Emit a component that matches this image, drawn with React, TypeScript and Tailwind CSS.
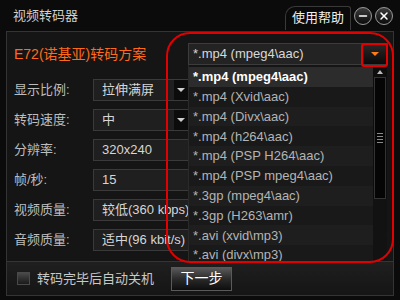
import { Minus, X } from "lucide-react";

const formats = [
  "*.mp4 (mpeg4\\aac)",
  "*.mp4 (Xvid\\aac)",
  "*.mp4 (Divx\\aac)",
  "*.mp4 (h264\\aac)",
  "*.mp4 (PSP H264\\aac)",
  "*.mp4 (PSP mpeg4\\aac)",
  "*.3gp (mpeg4\\aac)",
  "*.3gp (H263\\amr)",
  "*.avi (xvid\\mp3)",
  "*.avi (divx\\mp3)",
];

const fields = [
  { label: "显示比例:", value: "拉伸满屏", select: true },
  { label: "转码速度:", value: "中", select: true },
  { label: "分辨率:", value: "320x240", select: false },
  { label: "帧/秒:", value: "15", select: false },
  { label: "视频质量:", value: "较低(360 kbps)", select: false },
  { label: "音频质量:", value: "适中(96 kbit/s)", select: false },
];

function Arrow({ color = "border-t-[#cfcfcf]" }: { color?: string }) {
  return (
    <span
      className={`inline-block w-0 h-0 border-l-[4px] border-r-[4px] border-t-[4px] border-l-transparent border-r-transparent ${color}`}
    />
  );
}

export default function App() {
  return (
    <div
      className="relative w-[400px] h-[300px] overflow-hidden bg-[#0b0b0b] flex flex-col"
      style={{ fontFamily: '"Liberation Sans", "Noto Sans CJK SC", sans-serif' }}
    >
      {/* title bar */}
      <div className="h-[31px] flex items-center justify-between pl-[13px] pr-[7px]">
        <span className="text-[13px] text-[#cfcfcf]">视频转码器</span>
        <div className="flex items-center gap-[3px] self-stretch">
          <div className="mt-[4px] h-[24px] px-[6px] flex items-center rounded-tl-[10px] rounded-tr-[3px] border-t border-l border-r border-[#3a3a3a] bg-[#0a0a0a]">
            <span className="text-[13px] text-[#eeeeee]">使用帮助</span>
          </div>
          <span className="w-[18px] h-[18px] rounded-full border border-[#9a9a9a] bg-gradient-to-b from-[#3c3c3c] to-[#0c0c0c] flex items-center justify-center text-white">
            <Minus size={12} strokeWidth={3} />
          </span>
          <span className="w-[18px] h-[18px] rounded-full border border-[#9a9a9a] bg-gradient-to-b from-[#3c3c3c] to-[#0c0c0c] flex items-center justify-center text-white">
            <X size={12} strokeWidth={3} />
          </span>
        </div>
      </div>

      {/* main panel */}
      <div className="relative mx-[6px] h-[231px] border border-[#343434] bg-[#151515] pt-[11px] pl-[7px] pr-[5px] overflow-hidden">
        <div className="h-[22px] flex items-center justify-between">
          <span className="text-[14px] text-[#ff6a1a]">E72(诺基亚)转码方案</span>
          <div className="w-[200px] h-[22px] flex border border-[#3c3c3c] bg-[#232323]">
            <span className="flex-1 flex items-center pl-[4px] text-[13px] text-[#d8d8d8]">
              *.mp4 (mpeg4\aac)
            </span>
            <span className="w-[24px] flex items-center justify-center bg-gradient-to-b from-[#2a2a2a] to-[#0a0a0a]">
              <Arrow color="border-t-[#ff7b1c]" />
            </span>
          </div>
        </div>

        <div className="mt-[14px] flex flex-col gap-[8px]">
          {fields.map((f) => (
            <div key={f.label} className="h-[22px] flex items-center">
              <span className="w-[79px] text-[13px] text-[#bdbdbd]">{f.label}</span>
              <div className="w-[96px] h-[22px] flex border border-[#3a3a3a] bg-[#1f1f1f]">
                <span className="flex-1 flex items-center pl-[8px] text-[13px] text-[#d6d6d6] whitespace-nowrap">
                  {f.value}
                </span>
                {f.select && (
                  <span className="w-[14px] flex items-center justify-center bg-[#0c0c0c]">
                    <Arrow />
                  </span>
                )}
              </div>
            </div>
          ))}
        </div>

        {/* dropdown list */}
        <div className="absolute left-[181px] top-[33px] w-[201px] h-[200px] bg-[#151515] border-l border-[#2a2a2a] pt-[2px] flex">
          <div className="flex-1 flex flex-col">
            {formats.map((fmt, i) => (
              <div
                key={fmt}
                className={
                  i === 0
                    ? "h-[20px] flex items-center pl-[4px] text-[13px] font-bold text-white bg-[#2c2c2c]"
                    : i % 2 === 1
                    ? "h-[20px] flex items-center pl-[4px] text-[13px] text-[#b4b4b4] bg-[#191919]"
                    : "h-[20px] flex items-center pl-[4px] text-[13px] text-[#b4b4b4] bg-[#1e1e1e]"
                }
              >
                {fmt}
              </div>
            ))}
          </div>
          <div className="w-[14px] mr-[2px] flex flex-col bg-[#0d0d0d]">
            <div className="h-[10px] flex items-center justify-center">
              <span className="w-0 h-0 border-l-[3px] border-r-[3px] border-b-[4px] border-l-transparent border-r-transparent border-b-[#bbbbbb]" />
            </div>
            <div className="h-[122px] mx-[1px] border border-[#333] bg-[#050505] flex items-center justify-center">
              <div className="flex flex-col gap-[2px]">
                <span className="w-[6px] h-px bg-[#8a8a8a]" />
                <span className="w-[6px] h-px bg-[#8a8a8a]" />
                <span className="w-[6px] h-px bg-[#8a8a8a]" />
                <span className="w-[6px] h-px bg-[#8a8a8a]" />
              </div>
            </div>
            <div className="flex-1 bg-[#121212]" />
          </div>
        </div>
      </div>

      {/* bottom bar */}
      <div className="mx-[6px] h-[34px] bg-gradient-to-b from-[#1f1f1f] to-[#151515] border-x border-b border-[#343434] flex items-center pl-[10px]">
        <span className="w-[13px] h-[13px] border border-[#4a4a4a] bg-gradient-to-b from-[#4a4a4a] to-[#1a1a1a]" />
        <span className="ml-[7px] text-[13px] text-[#c8c8c8]">转码完毕后自动关机</span>
        <button className="ml-[17px] w-[61px] h-[24px] border border-[#5a5a5a] bg-gradient-to-b from-[#5a5a5a] via-[#2a2a2a] to-[#0e0e0e] text-[14px] text-white">
          下一步
        </button>
      </div>

      {/* red annotation marks */}
      <div className="absolute left-[166px] top-[32px] w-[228px] h-[231px] border-2 border-[#e30000] rounded-[24px] pointer-events-none" />
      <div className="absolute left-[361px] top-[43px] w-[27px] h-[24px] border-2 border-[#e30000] rounded-[3px] pointer-events-none" />
    </div>
  );
}
